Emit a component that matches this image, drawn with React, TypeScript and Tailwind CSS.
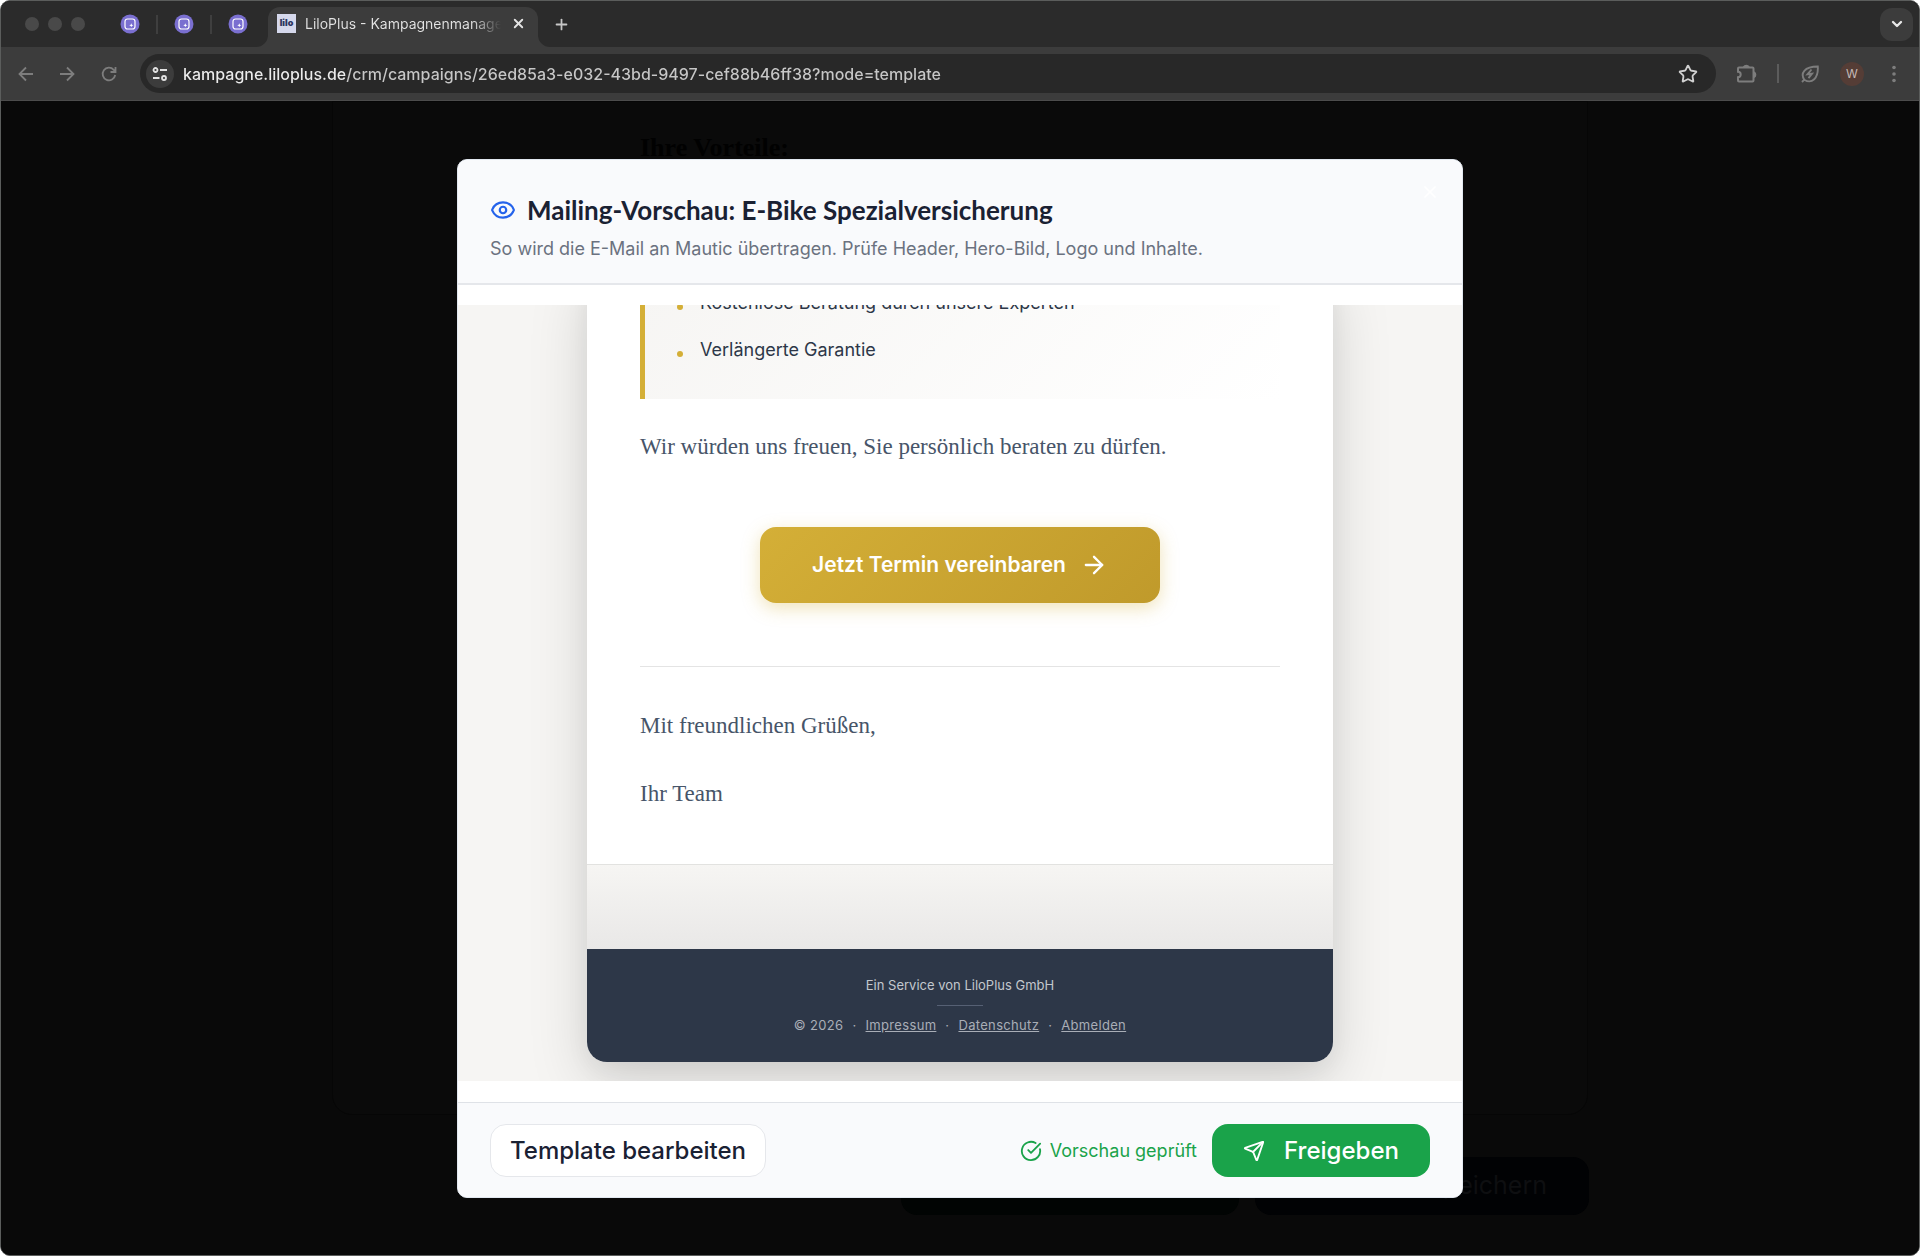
'use client';

/**
 * Mailing preview: the browser window with the dimmed campaign page behind,
 * and the preview dialog (header, scrolled mail, footer actions) on top.
 */
import { Fragment } from 'react';
import { ArrowRight, ChevronDown, CircleCheckBig, Eye, Plus, Send, Star, X } from 'lucide-react';

const URL = 'kampagne.liloplus.de/crm/campaigns/26ed85a3-e032-43bd-9497-cef88b46ff38?mode=template';
const PINNED_TABS = ['Mautic', 'Mautic Kontakte', 'Mautic Kampagnen'];
const LEGAL_LINKS = ['Impressum', 'Datenschutz', 'Abmelden'];
const BENEFITS = ['Kostenlose Beratung durch unsere Experten', 'Verlängerte Garantie'];

function PinnedIcon() {
  return (
    <svg viewBox="0 0 20 20" className="h-5 w-5">
      <circle cx="10" cy="10" r="9.500" fill="#7a6fd0" />
      <rect x="5" y="5" width="10" height="10" rx="2.500" fill="none" stroke="#fff" strokeWidth="1.200" />
      <path d="M11.300 9.300l.6 1.400 1.400.6-1.400.6-.6 1.400-.6-1.400-1.400-.6 1.400-.6z" fill="#fff" />
    </svg>
  );
}

function TabStrip() {
  return (
    <div className="flex h-[46px] items-end bg-[#2b2b2b] pr-[6px]">
      <div className="flex h-full items-center gap-[9px] pl-[24px]">
        <span className="h-[14px] w-[14px] rounded-full bg-[#494949]" />
        <span className="h-[14px] w-[14px] rounded-full bg-[#494949]" />
        <span className="h-[14px] w-[14px] rounded-full bg-[#494949]" />
      </div>
      <div className="flex h-full items-center gap-[16px] pl-[35px]">
        {PINNED_TABS.map((tab, i) => (
          <Fragment key={tab}>
            {i > 0 && <span className="h-[19px] w-[2px] bg-[#3f3f3f]" />}
            <button aria-label={tab}>
              <PinnedIcon />
            </button>
          </Fragment>
        ))}
      </div>
      <svg viewBox="0 0 12 12" className="ml-[8px] h-3 w-3 fill-[#3c3c3c]">
        <path d="M12 0v12H0A12 12 0 0 0 12 0z" />
      </svg>
      <div className="flex h-10 w-[270px] items-center rounded-t-[12px] bg-[#3c3c3c] pr-[12px] pb-[8px] pl-[9px]">
        <span className="flex h-[19px] w-[19px] shrink-0 items-center justify-center bg-[#d5d8ec] text-[9px] font-black text-[#2c3560]">
          lilo
        </span>
        <span className="ml-[9px] min-w-0 flex-1 overflow-hidden bg-gradient-to-r from-[#e3e3e3] from-85% to-transparent bg-clip-text text-[14px] whitespace-nowrap text-transparent">
          LiloPlus - Kampagnenmanagement
        </span>
        <button aria-label="Tab schließen" className="ml-[10px] text-[#e3e3e3]">
          <X className="h-[15px] w-[15px]" strokeWidth={3} />
        </button>
      </div>
      <svg viewBox="0 0 12 12" className="h-3 w-3 fill-[#3c3c3c]">
        <path d="M0 0v12h12A12 12 0 0 1 0 0z" />
      </svg>
      <button aria-label="Neuer Tab" className="ml-[3px] flex h-full items-center text-[#c7c7c7]">
        <Plus className="h-[17px] w-[17px]" strokeWidth={2.5} />
      </button>
      <div className="ml-auto flex h-full items-center">
        <button
          aria-label="Tabs durchsuchen"
          className="flex h-[33px] w-[33px] items-center justify-center rounded-[12px] bg-[#3c3c3c] text-[#e8e8e8]"
        >
          <ChevronDown className="h-4 w-4" strokeWidth={3.5} />
        </button>
      </div>
    </div>
  );
}

function Toolbar() {
  return (
    <div className="flex h-[54px] items-center border-b border-[#4c4c4c] bg-[#3c3c3c] pr-[15px] pl-[14px] text-[#7d7d7d]">
      <button aria-label="Zurück">
        <svg viewBox="0 0 22 22" className="h-[22px] w-[22px]" fill="none" stroke="currentColor" strokeWidth="1.800">
          <path d="M18 11H5M11 4.500l-6.500 6.500L11 17.500" />
        </svg>
      </button>
      <button aria-label="Vorwärts" className="ml-[19px]">
        <svg viewBox="0 0 22 22" className="h-[22px] w-[22px]" fill="none" stroke="currentColor" strokeWidth="1.800">
          <path d="M4 11h13M11 4.500l6.500 6.500L11 17.500" />
        </svg>
      </button>
      <button aria-label="Neu laden" className="ml-[20px]">
        <svg viewBox="0 0 22 22" className="h-[22px] w-[22px]" fill="none" stroke="currentColor" strokeWidth="1.800">
          <path d="M17.200 12A6.300 6.300 0 1 1 15.700 6.800L17.500 9M17.500 4v5h-5" />
        </svg>
      </button>
      <div className="ml-[20px] flex h-[39px] flex-1 items-center rounded-full bg-[#282828] pr-[18px] pl-[6px]">
        <button
          aria-label="Website-Informationen"
          className="flex h-[28px] w-[28px] shrink-0 items-center justify-center rounded-full bg-[#3c3c3c] text-[#e3e3e3]"
        >
          <svg viewBox="0 0 16 16" className="h-4 w-4" fill="none" stroke="currentColor" strokeWidth="1.800">
            <circle cx="3.500" cy="4" r="2" />
            <path d="M8 4h7M1 12h6.500" />
            <circle cx="12" cy="12" r="2" />
          </svg>
        </button>
        {/* host is brighter than the path */}
        <input
          type="text"
          aria-label="Adresse"
          defaultValue={URL}
          className="ml-[9px] flex-1 bg-[linear-gradient(90deg,#ececec_162px,#c7c7c7_162px)] bg-clip-text text-[16px] font-medium text-transparent outline-none"
        />
        <button aria-label="Lesezeichen" className="text-[#d0d0d0]">
          <Star className="h-[20px] w-[20px]" strokeWidth={2.2} strokeLinejoin="miter" />
        </button>
      </div>
      <button aria-label="Erweiterungen" className="ml-[20px]">
        <svg viewBox="0 0 22 22" className="h-[22px] w-[22px]" fill="none" stroke="currentColor" strokeWidth="2">
          <path d="M3 4.500h13.500q1 0 1 1V17.500q0 1-1 1H3q-1 0-1-1v-3.300a2.700 2.700 0 0 0 0-5.400V5.500q0-1 1-1z" />
          <path d="M8 4a2.500 2.200 0 0 1 4.600 0zM18 9.500a2.200 2.500 0 0 1 0 4.600z" fill="currentColor" />
        </svg>
      </button>
      <span className="ml-[19px] h-[19px] w-[2px] bg-[#5c5c5c]" />
      <button aria-label="Energiesparmodus" className="ml-[21px]">
        <svg viewBox="0 0 20 20" className="h-[20px] w-[20px]" fill="none" stroke="currentColor" strokeWidth="1.900">
          <path d="M2 18l2.300-2.300M4.300 15.700C.2 9.500 4 2.500 17.800 2.500 18.500 14 12 20.500 4.300 15.700z" />
          <path d="M11.500 5.500L7.500 10.300l4.500-.6-3.500 4.500" />
        </svg>
      </button>
      <button
        aria-label="Profil"
        className="ml-[20px] flex h-[24px] w-[24px] items-center justify-center rounded-full bg-[#553d36] text-[12px] text-[#c4bab7]"
      >
        W
      </button>
      <button aria-label="Menü" className="ml-[20px]">
        <svg viewBox="0 0 20 20" className="h-5 w-5" fill="currentColor">
          <circle cx="10" cy="3.500" r="1.800" />
          <circle cx="10" cy="10" r="1.800" />
          <circle cx="10" cy="16.500" r="1.800" />
        </svg>
      </button>
    </div>
  );
}

// Campaign page, as it shines through the dark overlay
function DimmedPage() {
  return (
    <div className="absolute inset-0 overflow-hidden bg-[#090909]">
      <div className="mx-auto flex h-[1014px] max-w-[1256px] justify-center rounded-b-[20px] border border-[#060606] bg-[#0a0a0a]">
        <p className="w-[640px] pt-[28px] font-['Liberation_Serif',serif] text-[26px] leading-[36px] font-bold text-[#010101]">
          Ihre Vorteile:
        </p>
      </div>
      <div className="mx-auto mt-[42px] flex max-w-[1258px] justify-end gap-[16px]">
        <div className="h-[58px] w-[338px] rounded-[16px] bg-[#010403]" />
        <div className="flex h-[58px] w-[334px] items-center justify-end rounded-[16px] bg-[#010204] pr-[42px] text-[25px] text-[#0e0f11]">
          Speichern
        </div>
      </div>
    </div>
  );
}

function MailPreview() {
  return (
    <div className="flex h-[776px] flex-col justify-end overflow-hidden bg-[#f6f5f3] px-[129px] pb-[19px]">
      <article className="shrink-0 overflow-hidden rounded-[20px] bg-white shadow-[0_20px_60px_rgba(0,0,0,0.15),0_8px_24px_rgba(0,0,0,0.05)]">
        <div className="px-[53px] pb-[52px] text-[23px] leading-[36px] text-[#475569]">
          <ul className="border-l-[5px] border-[#d4af37] bg-[linear-gradient(135deg,#f6f5f3,#ffffff)] pt-[20px] pb-[34px] pl-[32px] font-['Inter',sans-serif] text-[18px] leading-[30px] text-[#2d3748]">
            {BENEFITS.map((benefit) => (
              <li key={benefit} className="flex items-center pb-[17px] last:pb-0">
                <span className="mt-[8px] mr-[17px] h-[6px] w-[6px] rounded-full bg-[#d4af37]" />
                {benefit}
              </li>
            ))}
          </ul>
          <div className="font-['Liberation_Serif',serif]">
            <p className="mt-[30px]">Wir würden uns freuen, Sie persönlich beraten zu dürfen.</p>
            <a
              href="#termin"
              className="mx-auto mt-[62px] flex h-[76px] w-[400px] items-center justify-center gap-[14px] rounded-[16px] bg-[linear-gradient(135deg,#d4af37,#c09a2b)] font-['Inter',sans-serif] text-[21px] font-semibold text-white shadow-[0_5px_18px_rgba(212,175,55,0.35)]"
            >
              Jetzt Termin vereinbaren
              <ArrowRight className="h-7 w-7" />
            </a>
            <hr className="mt-[63px] border-[#e4e4e4]" />
            <p className="mt-[41px]">Mit freundlichen Grüßen,</p>
            <p className="mt-[32px]">Ihr Team</p>
          </div>
        </div>
        <div className="h-[85px] border-t border-[#e2e2e0] bg-gradient-to-b from-[#f6f5f3] to-[#e9e8e7]" />
        <footer className="flex h-[113px] flex-col items-center bg-[#2d3748] pt-[26px] text-[13px] leading-[20px] text-[#c3c7cd]">
          <p>Ein Service von LiloPlus GmbH</p>
          <span className="mt-[10px] h-px w-[46px] bg-[#566074]" />
          <p className="mt-[9px] flex gap-[9px] tracking-wide text-[#a9aeb7]">
            <span>© 2026</span>
            {LEGAL_LINKS.map((link) => (
              <Fragment key={link}>
                <span>·</span>
                <a href={`#${link.toLowerCase()}`} className="underline">
                  {link}
                </a>
              </Fragment>
            ))}
          </p>
        </footer>
      </article>
    </div>
  );
}

function PreviewDialog() {
  return (
    <section
      role="dialog"
      aria-labelledby="preview-title"
      className="relative w-full max-w-[1006px] overflow-hidden rounded-[10px] border border-[#e2e8f0] bg-white"
    >
      <header className="border-b-2 border-[#e5e7eb] bg-[#f9fafc] px-[32px] pt-[31px] pb-[20px]">
        <h1
          id="preview-title"
          className="flex items-center gap-[11px] font-['Lato',sans-serif] text-[26px] leading-[38px] font-bold text-[#1a2133]"
        >
          <Eye className="h-[26px] w-[26px] text-[#2563eb]" />
          Mailing-Vorschau: E-Bike Spezialversicherung
        </h1>
        <p className="mt-[6px] text-[18px] leading-[28px] text-[#6b7280]">
          So wird die E-Mail an Mautic übertragen. Prüfe Header, Hero-Bild, Logo und Inhalte.
        </p>
      </header>
      <button aria-label="Schließen" className="absolute top-[22px] right-[22px] text-white">
        <X className="h-5 w-5" />
      </button>
      <div className="pt-[20px] pb-[21px]">
        <MailPreview />
      </div>
      <footer className="flex items-center border-t border-[#dfe2e7] bg-[#f9fafc] px-[32px] pt-[21px] pb-[20px]">
        <button className="h-[53px] rounded-[16px] border border-[#e5e7eb] bg-white px-[19px] text-[24px] font-medium text-[#1a2133]">
          Template bearbeiten
        </button>
        <p className="ml-auto flex items-center gap-[8px] text-[18px] text-[#1aa34a]">
          <CircleCheckBig className="h-[22px] w-[22px]" />
          Vorschau geprüft
        </p>
        <button className="ml-[15px] flex h-[53px] w-[218px] items-center justify-center gap-[19px] rounded-[16px] bg-[#1aa34a] text-[24px] font-medium text-white">
          <Send className="h-[22px] w-[22px]" />
          Freigeben
        </button>
      </footer>
    </section>
  );
}

export default function App() {
  return (
    <div className="flex min-h-screen flex-col overflow-hidden rounded-[10px] border border-[#5b5d5c] bg-[#090909] font-['Inter',sans-serif]">
      <TabStrip />
      <Toolbar />
      <main className="relative flex-1">
        <DimmedPage />
        <div className="relative flex justify-center pt-[58px]">
          <PreviewDialog />
        </div>
      </main>
    </div>
  );
}
